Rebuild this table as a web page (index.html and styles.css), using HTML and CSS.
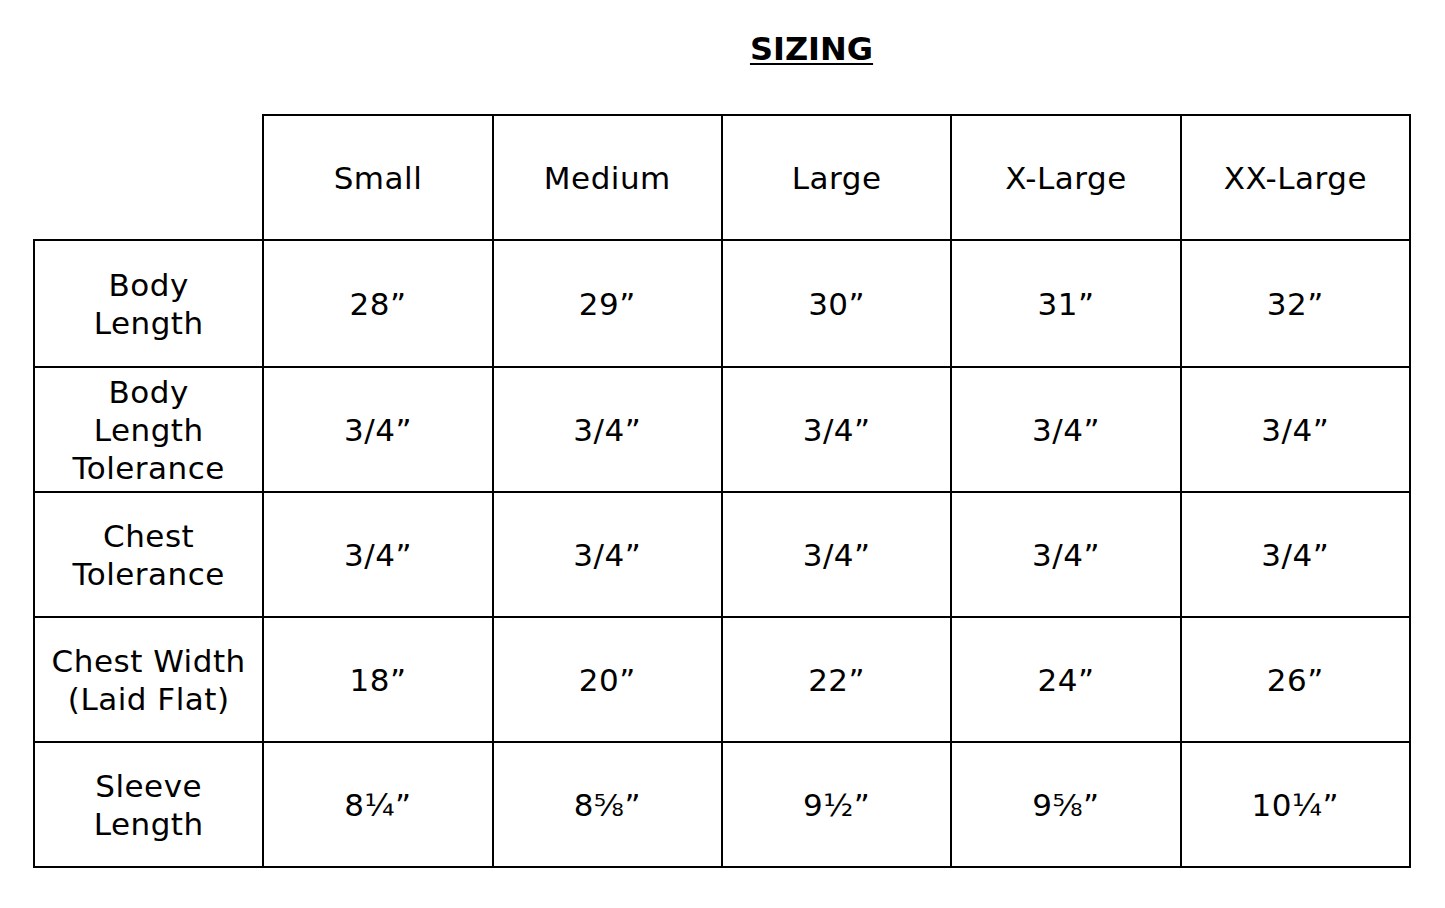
FILE: index.html
```html
<!DOCTYPE html>
<html lang="en">
<head>
<meta charset="utf-8">
<title>Sizing</title>
<link rel="stylesheet" href="styles.css">
</head>
<body>
<main class="page">
  <h1 class="title">SIZING</h1>
  <table class="sizes">
    <thead>
      <tr>
        <th class="corner"></th>
        <th>Small</th>
        <th>Medium</th>
        <th>Large</th>
        <th>X-Large</th>
        <th>XX-Large</th>
      </tr>
    </thead>
    <tbody>
      <tr class="first">
        <th class="label">Body<br>Length</th>
        <td>28”</td><td>29”</td><td>30”</td><td>31”</td><td>32”</td>
      </tr>
      <tr>
        <th class="label">Body<br>Length<br>Tolerance</th>
        <td>3/4”</td><td>3/4”</td><td>3/4”</td><td>3/4”</td><td>3/4”</td>
      </tr>
      <tr>
        <th class="label">Chest<br>Tolerance</th>
        <td>3/4”</td><td>3/4”</td><td>3/4”</td><td>3/4”</td><td>3/4”</td>
      </tr>
      <tr>
        <th class="label">Chest Width<br>(Laid Flat)</th>
        <td>18”</td><td>20”</td><td>22”</td><td>24”</td><td>26”</td>
      </tr>
      <tr>
        <th class="label">Sleeve<br>Length</th>
        <td>8¼”</td><td>8⅝”</td><td>9½”</td><td>9⅝”</td><td>10¼”</td>
      </tr>
    </tbody>
  </table>
</main>
</body>
</html>
```

FILE: styles.css
```css
html, body {
  margin: 0;
  padding: 0;
  background: #fff;
}

.page {
  padding: 29px 0 0 33px;
  font-family: "DejaVu Sans", "Liberation Sans", sans-serif;
  color: #000;
}

.title {
  width: 1377px;
  box-sizing: border-box;
  margin: 0;
  padding-left: 180px;
  height: 85px;
  text-align: center;
  font-size: 32px;
  font-weight: 700;
  line-height: 40px;
  text-decoration: underline;
  text-decoration-thickness: 2px;
  text-underline-offset: 3px;
}

.sizes {
  border-collapse: collapse;
  width: 1378px;
  table-layout: fixed;
  font-size: 31px;
  line-height: 38px;
  letter-spacing: 0.5px;
}

.sizes th,
.sizes td {
  border: 2px solid #000;
  padding: 0;
  height: 123px;
  text-align: center;
  vertical-align: middle;
  font-weight: 400;
}

.sizes .first th,
.sizes .first td {
  height: 125px;
}

.sizes .corner {
  border-top: none;
  border-left: none;
}
```
